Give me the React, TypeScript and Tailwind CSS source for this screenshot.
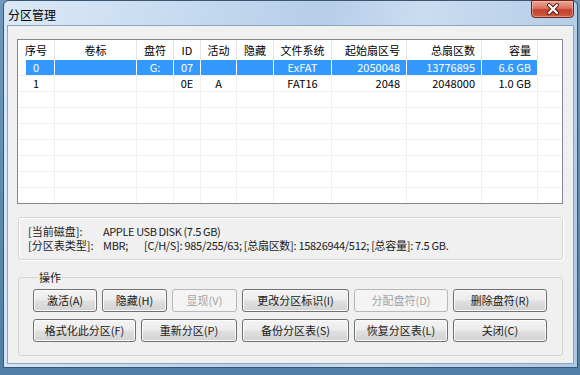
import React from "react";

const FONT = { fontFamily: '"Noto Sans CJK SC", "Liberation Sans", sans-serif' };

type Align = "c" | "r";
const headers: { t: string; a: Align }[] = [
  { t: "序号", a: "c" },
  { t: "卷标", a: "c" },
  { t: "盘符", a: "c" },
  { t: "ID", a: "c" },
  { t: "活动", a: "c" },
  { t: "隐藏", a: "c" },
  { t: "文件系统", a: "c" },
  { t: "起始扇区号", a: "r" },
  { t: "总扇区数", a: "r" },
  { t: "容量", a: "r" },
];

const rows: string[][] = [
  ["0", "", "G:", "07", "", "", "ExFAT", "2050048", "13776895", "6.6 GB"],
  ["1", "", "", "0E", "A", "", "FAT16", "2048", "2048000", "1.0 GB"],
  ["", "", "", "", "", "", "", "", "", ""],
  ["", "", "", "", "", "", "", "", "", ""],
  ["", "", "", "", "", "", "", "", "", ""],
  ["", "", "", "", "", "", "", "", "", ""],
  ["", "", "", "", "", "", "", "", "", ""],
  ["", "", "", "", "", "", "", "", "", ""],
  ["", "", "", "", "", "", "", "", "", ""],
];

const GRID = "grid grid-cols-[37px_82px_37px_27px_36px_37px_58px_75px_75px_56px_1fr]";

function Btn({ w, children, disabled }: { w: string; children: React.ReactNode; disabled?: boolean }) {
  return disabled ? (
    <div
      className={`${w} h-[23px] rounded-[3px] border border-[#b4b8bb] bg-[#f4f4f4] text-[#a3a3a3] text-[11px] leading-[13px] flex items-center justify-center`}
    >
      {children}
    </div>
  ) : (
    <div
      className={`${w} h-[23px] rounded-[3px] border border-[#707070] bg-[linear-gradient(to_bottom,#f4f4f4_0%,#ececec_45%,#dfdfdf_55%,#d2d2d2_100%)] shadow-[inset_0_0_0_1px_#fbfbfb] text-[#1a1a1a] text-[11px] leading-[13px] flex items-center justify-center`}
    >
      {children}
    </div>
  );
}

export default function App() {
  return (
    <div className="w-[580px] h-[375px] bg-[linear-gradient(to_bottom,#6e98be,#4f7ea6)] overflow-hidden" style={FONT}>
      <div className="ml-[3px] w-[575px] h-[368px] border border-[#3b5670] rounded-t-[6px] bg-[linear-gradient(100deg,#dbe9f7_0%,#c6dbf0_28%,#b6cee9_50%,#cadcf0_66%,#adc8e5_100%)] px-[3px] pb-[3px] flex flex-col">
        {/* Title bar */}
        <div className="h-[24px] flex items-start justify-between">
          <div className="pl-[1px] pt-[7px] text-[12px] leading-[13px] text-black">分区管理</div>
          <div className="w-[43px] h-[18px] mt-[-1px] rounded-b-[4px] border border-[#6b2418] bg-[linear-gradient(to_bottom,#eaa698_0%,#da7361_45%,#c43f2a_55%,#cc5c40_100%)] shadow-[inset_0_0_0_1px_rgba(255,200,190,0.5)] flex items-center justify-center">
            <svg width="14" height="12" viewBox="0 0 14 12">
              <path d="M3 2 L11 10 M11 2 L3 10" stroke="#5a1a10" strokeWidth="4" strokeLinecap="round" />
              <path d="M3 2 L11 10 M11 2 L3 10" stroke="#ffffff" strokeWidth="2.2" strokeLinecap="round" />
            </svg>
          </div>
        </div>

        {/* Client area */}
        <div className="flex-1 border border-[#8aa5c2] bg-[#f0f0f0] flex flex-col">
          {/* List view */}
          <div className="ml-[9px] mt-[13px] w-[546px] h-[165px] border border-[#828790] bg-white overflow-hidden">
            <div className={`${GRID} h-[20px] text-[11px] text-black`}>
              {headers.map((h, i) => (
                <div
                  key={i}
                  className={`border-r border-[#e5e5e5] flex items-center leading-[13px] ${h.a === "c" ? "justify-center" : "justify-end pr-[6px]"}`}
                >
                  {h.t}
                </div>
              ))}
              <div />
            </div>
            {rows.map((r, ri) => {
              const sel = ri === 0;
              return (
                <div key={ri} className={`${GRID} h-[16px] text-[11px] leading-[13px]`}>
                  {r.map((c, ci) => (
                    <div
                      key={ci}
                      className={`border-b border-r flex items-center ${headers[ci].a === "c" ? "justify-center" : "justify-end pr-[6px]"} ${
                        sel
                          ? ci === 0
                            ? "border-b-[#f0f0f0] border-r-white text-white bg-[linear-gradient(to_right,#ffffff_8px,#3399ff_8px)]"
                            : "border-b-[#f0f0f0] border-r-white text-white bg-[#3399ff]"
                          : "border-[#f0f0f0] text-black"
                      }`}
                    >
                      {c}
                    </div>
                  ))}
                  <div className="border-b border-[#f0f0f0]" />
                </div>
              );
            })}
          </div>

          {/* Info box */}
          <div className="ml-[10px] mt-[13px] w-[545px] h-[43px] rounded-[3px] border border-[#d5d5d5] shadow-[inset_1px_1px_0_#ffffff,1px_1px_0_#ffffff] pl-[9px] pt-[6px] text-[11px] leading-[14px] text-[#1a1a1a]">
            <div className="flex">
              <div className="w-[75px]">[当前磁盘]:</div>
              <div className="tracking-[-0.4px]">APPLE USB DISK (7.5 GB)</div>
            </div>
            <div className="flex">
              <div className="w-[75px]">[分区表类型]:</div>
              <div className="w-[41px] tracking-[-0.3px]">MBR;</div>
              <div className="tracking-[-0.3px]">[C/H/S]: 985/255/63; [总扇区数]: 15826944/512; [总容量]: 7.5 GB.</div>
            </div>
          </div>

          {/* Operations group */}
          <fieldset className="ml-[10px] mt-[11px] w-[545px] rounded-[3px] border border-[#d5d5d5] pl-[14px] pt-[5px] pb-[13px]">
            <legend className="ml-[5px] px-[1px] text-[11px] leading-[13px] text-[#1a1a1a]">操作</legend>
            <div className="flex flex-col gap-[7px]">
              <div className="flex gap-[5px]">
                <Btn w="w-[64px]">激活(A)</Btn>
                <Btn w="w-[65px]">隐藏(H)</Btn>
                <Btn w="w-[65px]" disabled>显现(V)</Btn>
                <Btn w="w-[107px]">更改分区标识(I)</Btn>
                <Btn w="w-[94px]" disabled>分配盘符(D)</Btn>
                <Btn w="w-[94px]">删除盘符(R)</Btn>
              </div>
              <div className="flex gap-[5px]">
                <Btn w="w-[103px]">格式化此分区(F)</Btn>
                <Btn w="w-[96px]">重新分区(P)</Btn>
                <Btn w="w-[107px]">备份分区表(S)</Btn>
                <Btn w="w-[94px]">恢复分区表(L)</Btn>
                <Btn w="w-[94px]">关闭(C)</Btn>
              </div>
            </div>
          </fieldset>
        </div>
      </div>
    </div>
  );
}
